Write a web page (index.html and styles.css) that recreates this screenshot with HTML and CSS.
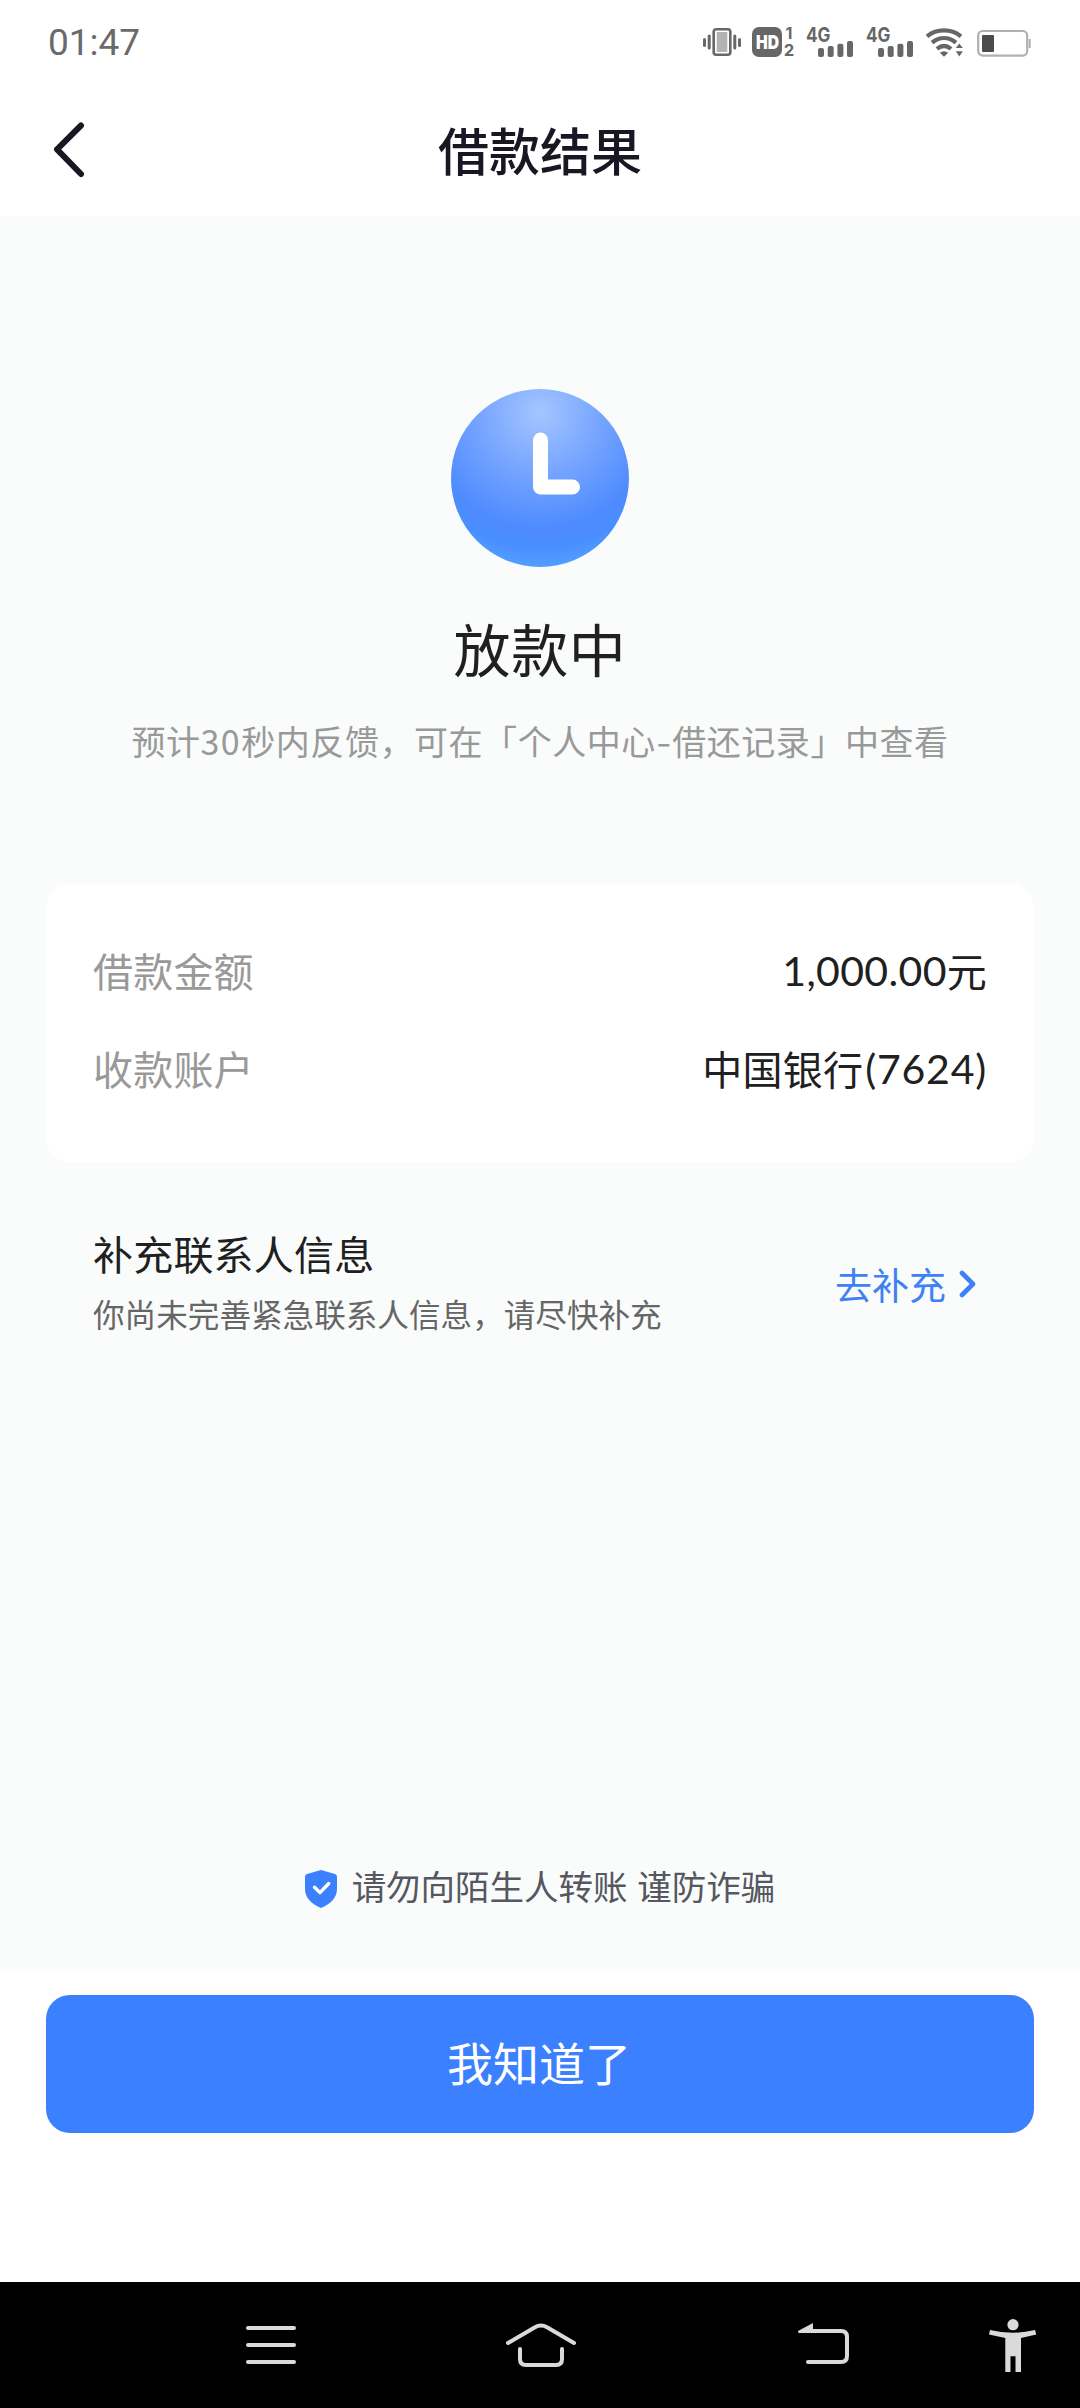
FILE: index.html
```html
<!DOCTYPE html>
<html lang="zh-CN">
<head>
<meta charset="utf-8">
<meta name="viewport" content="width=device-width">
<title>借款结果</title>
<link rel="stylesheet" href="styles.css">
</head>
<body>
<div class="status">
  <time class="clock">01:47</time>
  <div class="status-icons">
    <svg class="i-vibrate" width="38" height="30" viewBox="0 0 38 30" fill="#676767"><rect x="0" y="11" width="3" height="9" rx="1.5"/><rect x="4.7" y="7.5" width="3" height="15" rx="1.5"/><rect x="30.3" y="7.5" width="3" height="15" rx="1.5"/><rect x="35" y="11" width="3" height="9" rx="1.5"/><rect x="10.7" y="2.2" width="16.6" height="25.6" rx="2.5" fill="#fff" stroke="#676767" stroke-width="2.6"/><rect x="13.7" y="5" width="10.6" height="20" fill="#b3b3b3"/></svg>
    <svg class="i-hd" width="43" height="30" viewBox="0 0 43 30" fill="#676767"><rect width="30" height="30" rx="7"/><text class="hd-label" x="4" y="21.7" textLength="23" lengthAdjust="spacingAndGlyphs">HD</text><text class="sim" x="33.4" y="12">1</text><text class="sim" x="31.8" y="29" textLength="10.5" lengthAdjust="spacingAndGlyphs">2</text></svg>
    <svg class="i-signal" width="48" height="30" viewBox="0 0 48 30" fill="#676767"><text class="net" x="0" y="14.6" textLength="24.5" lengthAdjust="spacingAndGlyphs">4G</text><rect x="12" y="21" width="6" height="9" rx="2"/><rect x="21.7" y="19" width="6" height="11" rx="2"/><rect x="31.4" y="16.7" width="6" height="13.3" rx="2"/><rect x="41" y="14" width="6" height="16" rx="2"/></svg>
    <svg class="i-signal" width="48" height="30" viewBox="0 0 48 30" fill="#676767"><text class="net" x="0" y="14.6" textLength="24.5" lengthAdjust="spacingAndGlyphs">4G</text><rect x="12" y="21" width="6" height="9" rx="2"/><rect x="21.7" y="19" width="6" height="11" rx="2"/><rect x="31.4" y="16.7" width="6" height="13.3" rx="2"/><rect x="41" y="14" width="6" height="16" rx="2"/></svg>
    <svg class="i-wifi" width="37" height="30" viewBox="0 0 37 30" fill="none" stroke="#676767" stroke-width="4.2"><path d="M1 9.3C11 1.5 25 1.5 35 9.3M6 15.7C13.5 9.7 22.5 9.7 30 15.7M11 21.9C15.5 18.2 20.5 18.2 25 21.9"/><path d="M13.8 25.7Q18 22.6 22.2 25.7L18 29.8ZM33.3 16.4L36.8 21H29.8ZM29.8 24.2H36.8L33.3 29.4Z" fill="#676767" stroke="none"/></svg>
    <svg class="i-battery" width="55" height="30" viewBox="0 0 55 30"><rect x="1.2" y="4" width="49" height="24.6" rx="4.5" fill="none" stroke="#b0b0b0" stroke-width="2.2"/><rect x="5" y="8" width="12" height="17" rx="1" fill="#4c4c4c"/><path d="M52.7 12V21" stroke="#b0b0b0" stroke-width="2"/></svg>
  </div>
</div>
<header class="header">
  <svg class="back" width="34" height="58" viewBox="0 0 34 58"><path d="M29 5.5L5 29.3L29 54" fill="none" stroke="#171824" stroke-width="6" stroke-linecap="round" stroke-linejoin="round"/></svg>
  <h1 class="title">借款结果</h1>
</header>
<main class="content">
  <svg class="clock-icon" width="178" height="178" viewBox="0 0 178 178">
    <defs><radialGradient id="face" gradientUnits="userSpaceOnUse" cx="89" cy="24" r="155"><stop offset="0" stop-color="#a5c5ff"/><stop offset=".4" stop-color="#75a4ff"/><stop offset=".75" stop-color="#4e8bff"/><stop offset=".87" stop-color="#498eff"/><stop offset="1" stop-color="#52a0ff"/></radialGradient></defs>
    <circle cx="89" cy="89" r="89" fill="url(#face)"/>
    <path d="M89.5 51V98H121.5" fill="none" stroke="#fff" stroke-width="15" stroke-linecap="round" stroke-linejoin="round"/>
  </svg>
  <h2 class="state">放款中</h2>
  <p class="hint">预计<span class="hint-num">30</span>秒内反馈，可在「个人中心<span class="dash">-</span>借还记录」中查看</p>
  <section class="card">
    <div class="row"><span class="label">借款金额</span><span class="value"><span class="num amount">1,000.00</span>元</span></div>
    <div class="row"><span class="label">收款账户</span><span class="value">中国银行<span class="num tail">(7624)</span></span></div>
  </section>
  <section class="contact">
    <div class="contact-text">
      <h3 class="contact-title">补充联系人信息</h3>
      <p class="contact-desc">你尚未完善紧急联系人信息，请尽快补充</p>
    </div>
    <a class="link">去补充<svg class="chevron" width="18" height="30" viewBox="0 0 18 30"><path d="M3 4L14 15L3 26" fill="none" stroke="#3f80f6" stroke-width="4.6" stroke-linecap="round" stroke-linejoin="round"/></svg></a>
  </section>
  <div class="safety">
    <svg class="shield" width="32" height="38" viewBox="0 0 32 38"><path d="M16 0L30 4Q32 4.6 32 6.5V19C32 28 25 34.5 16 38C7 34.5 0 28 0 19V6.5Q0 4.6 2 4Z" fill="#3b80ff"/><path d="M9.5 17.2L15 22.6L23.7 13.5" fill="none" stroke="#fff" stroke-width="3.4" stroke-linecap="round" stroke-linejoin="round"/></svg>
    <span class="safety-text">请勿向陌生人转账 谨防诈骗</span>
  </div>
</main>
<footer class="footer"><button class="confirm">我知道了</button></footer>
<nav class="nav">
  <svg class="nav-menu" width="50" height="38" viewBox="0 0 50 38"><path d="M2 2H48M2 19H48M2 36H48" stroke="#dadada" stroke-width="4" stroke-linecap="round"/></svg>
  <svg class="nav-home" width="70" height="44" viewBox="0 0 70 44"><path d="M2 20L29 4.2Q35 .8 41 4.2L68 20M14 26V36Q14 42 20 42H50Q56 42 56 36V26" fill="none" stroke="#dadada" stroke-width="4" stroke-linecap="round"/></svg>
  <svg class="nav-back" width="51" height="42" viewBox="0 0 51 42"><path d="M10 8H43Q49 8 49 14V33Q49 39 43 39H10" fill="none" stroke="#dadada" stroke-width="4" stroke-linecap="round"/><path d="M0 8L15 0V10H1Q0 10 0 8Z" fill="#dadada"/></svg>
  <svg class="nav-person" width="48" height="54" viewBox="0 0 48 54" fill="#dadada"><circle cx="24" cy="5.7" r="5.6"/><path d="M1 11Q24 16.5 46 11L47.3 15.6L32 19V53H26.5V37.3H21.5V53H16.3V19L0 15.6Z"/></svg>
</nav>
</body>
</html>
```
FILE: styles.css
```css
* { box-sizing: border-box; }
body {
  margin: 0;
  width: 1080px;
  height: 2408px;
  display: flex;
  flex-direction: column;
  background: #fff;
  color: #202020;
  font-family: "Noto Sans CJK SC", sans-serif;
  overflow: hidden;
}
h1, h2, h3, p { margin: 0; font-weight: 400; white-space: nowrap; }

.status { display: flex; justify-content: space-between; height: 84px; padding: 0 48px; }
.clock { padding-top: 21px; font: 37px/44px Roboto, sans-serif; color: #6a6a6a; }
.status-icons { display: flex; padding-top: 27px; height: 57px; }
.status-icons svg { overflow: visible; }
.i-hd { margin-left: 11px; }
.i-signal { margin-left: 11px; }
.i-signal + .i-signal { margin-left: 12px; }
.i-wifi { margin-left: 12px; }
.i-battery { margin-left: 14px; }
.hd-label { font: 900 19px Inter, sans-serif; fill: #fff; }
.sim { font: 700 16px Inter, sans-serif; }
.net { font: 700 20px Inter, sans-serif; }

.header { display: flex; height: 132px; padding: 0 46px 0 52px; }
.back { margin-top: 36px; flex: none; }
.title { flex: 1; padding-right: 40px; text-align: center; font-size: 51px; line-height: 131px; font-weight: 500; color: #171824; }

.content { display: flex; flex-direction: column; height: 1755px; padding: 173px 46px 0; background: #fafcfb; }
.clock-icon { align-self: center; }
.state { margin-top: 40px; text-align: center; font-size: 57px; line-height: 80px; letter-spacing: .6px; }
.hint { margin-top: 29px; text-align: center; font-size: 34px; line-height: 50px; letter-spacing: .55px; color: #999; }
.hint-num { letter-spacing: 1.5px; }
.dash { display: inline-block; padding: 0 2px; transform: scaleX(1.25); }

.card { margin-top: 118px; height: 278px; padding: 37px 47px; background: #fff; border-radius: 24px; }
.row { display: flex; justify-content: space-between; height: 98px; font-size: 40px; line-height: 98px; letter-spacing: .2px; }
.label { color: #999; }
.value { display: flex; }
.num { font-family: Lato, sans-serif; line-height: 100px; }
.amount { font-size: 41px; letter-spacing: .35px; }
.tail { padding-left: 2px; font-size: 41px; letter-spacing: .8px; }

.contact { display: flex; justify-content: space-between; margin-top: 56px; padding: 0 57px 0 47px; }
.contact-title { font-size: 40px; line-height: 70px; letter-spacing: .2px; }
.contact-desc { font-size: 31.6px; line-height: 51px; color: #666; }
.link { display: flex; align-items: center; gap: 13px; height: 132px; font-size: 37px; color: #3f80f6; }

.safety { display: flex; justify-content: center; align-items: center; gap: 15px; margin-top: auto; margin-bottom: 57px; height: 50px; }
.safety-text { margin-bottom: 8px; font-size: 34.5px; line-height: 50px; word-spacing: 2px; color: #555761; }

.footer { height: 311px; padding: 24px 46px 0; }
.confirm { display: block; width: 100%; height: 138px; padding: 0 2px 6px 0; border: 0; border-radius: 24px; background: #3b80ff; color: #fff; font: 46px/132px "Noto Sans CJK SC", sans-serif; }

.nav { display: flex; height: 126px; padding-left: 246px; background: #000; }
.nav-menu { margin-top: 44px; }
.nav-home { margin: 41px 0 0 210px; }
.nav-back { margin: 41px 0 0 222px; }
.nav-person { margin: 37px 0 0 140px; }
```
